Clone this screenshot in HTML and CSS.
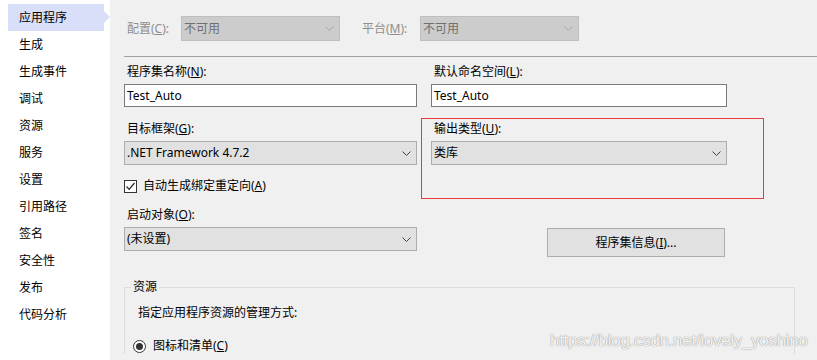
FILE: index.html
```html
<!DOCTYPE html>
<html lang="zh-CN">
<head>
<meta charset="utf-8"/>
<title>项目属性 - 应用程序</title>
<link rel="stylesheet" href="styles.css">
</head>
<body>
<div class="page">
  <!-- 左侧导航 -->
  <nav class="sidebar">
    <div class="nav-item active">应用程序</div>
    <div class="nav-item">生成</div>
    <div class="nav-item">生成事件</div>
    <div class="nav-item">调试</div>
    <div class="nav-item">资源</div>
    <div class="nav-item">服务</div>
    <div class="nav-item">设置</div>
    <div class="nav-item">引用路径</div>
    <div class="nav-item">签名</div>
    <div class="nav-item">安全性</div>
    <div class="nav-item">发布</div>
    <div class="nav-item">代码分析</div>
  </nav>

  <main class="main">
    <div class="config-row">
      <span class="label disabled cfg-label">配置(<u>C</u>):</span>
      <div class="combo disabled">
        <span>不可用</span>
        <svg class="chevron" width="9" height="5" viewBox="0 0 9 5"><polyline points="0.5,0.5 4.5,4.5 8.5,0.5"/></svg>
      </div>
      <span class="label disabled plat-label">平台(<u>M</u>):</span>
      <div class="combo disabled">
        <span>不可用</span>
        <svg class="chevron" width="9" height="5" viewBox="0 0 9 5"><polyline points="0.5,0.5 4.5,4.5 8.5,0.5"/></svg>
      </div>
    </div>

    <div class="separator"></div>

    <div class="form-grid">
      <div class="field">
        <span class="label">程序集名称(<u>N</u>):</span>
        <div class="textbox">Test_Auto</div>
      </div>
      <div class="field">
        <span class="label">默认命名空间(<u>L</u>):</span>
        <div class="textbox">Test_Auto</div>
      </div>

      <div class="field">
        <span class="label">目标框架(<u>G</u>):</span>
        <div class="combo">
          <span>.NET Framework 4.7.2</span>
          <svg class="chevron" width="9" height="5" viewBox="0 0 9 5"><polyline points="0.5,0.5 4.5,4.5 8.5,0.5"/></svg>
        </div>
      </div>
      <div class="field">
        <span class="label">输出类型(<u>U</u>):</span>
        <div class="combo">
          <span>类库</span>
          <svg class="chevron" width="9" height="5" viewBox="0 0 9 5"><polyline points="0.5,0.5 4.5,4.5 8.5,0.5"/></svg>
        </div>
      </div>

      <div class="check-row">
        <span class="checkbox">
          <svg width="11" height="11" viewBox="0 0 11 11"><polyline points="1.5,5.5 4.2,8.3 9.5,2"/></svg>
        </span>
        <span>自动生成绑定重定向(<u>A</u>)</span>
      </div>
      <div></div>

      <div class="field">
        <span class="label">启动对象(<u>O</u>):</span>
        <div class="combo">
          <span>(未设置)</span>
          <svg class="chevron" width="9" height="5" viewBox="0 0 9 5"><polyline points="0.5,0.5 4.5,4.5 8.5,0.5"/></svg>
        </div>
      </div>
      <div class="btn-cell">
        <button class="btn">程序集信息(<u>I</u>)...</button>
      </div>
    </div>

    <fieldset class="group">
      <legend>资源</legend>
      <div class="group-text">指定应用程序资源的管理方式:</div>
      <div class="radio-row">
        <span class="radio"><span class="dot"></span></span>
        <span>图标和清单(<u>C</u>)</span>
      </div>
    </fieldset>
  </main>
</div>

<!-- 红框标注 -->
<div class="annot"></div>
<div class="watermark">https://blog.csdn.net/lovely_yoshino</div>
</body>
</html>
```

FILE: styles.css
```css
html, body {
    height: 360px;
    overflow: hidden;
}

body {
    margin: 0;
    background: #f0f0f0;
    color: #000;
    font-family: "Noto Sans", "Noto Sans CJK SC", sans-serif;
    font-size: 12px;
    line-height: 16px;
}

.page {
    display: flex;
    height: 360px;
    overflow: hidden;
}

/* 左侧导航 */
.sidebar {
    width: 110px;
    flex-shrink: 0;
    background: #fff;
    padding-top: 4px;
    box-sizing: border-box;
}

.nav-item {
    position: relative;
    margin-left: 8px;
    width: 96px;
    height: 27px;
    line-height: 27px;
    padding-left: 11px;
    box-sizing: border-box;
}

.nav-item.active {
    background: #dadff9;
}

.nav-item.active::after {
    content: "";
    position: absolute;
    right: -6px;
    top: 7px;
    border-left: 6px solid #dadff9;
    border-top: 6px solid transparent;
    border-bottom: 6px solid transparent;
}

/* 右侧内容 */
.main {
    flex: 1;
    padding: 16px 0 0 14px;
    overflow: hidden;
}

.config-row {
    display: flex;
    align-items: center;
    height: 25px;
}

.label.disabled {
    color: #8e8e8e;
}

.cfg-label {
    width: 57px;
    padding-left: 3px;
    box-sizing: border-box;
}

.plat-label {
    width: 58px;
    margin-left: 22px;
}

.separator {
    height: 1px;
    background: #a0a0a0;
    margin-top: 15px;
}

.form-grid {
    display: grid;
    grid-template-columns: 293px 296px;
    column-gap: 14px;
    row-gap: 14px;
    margin-top: 7px;
}

.field {
    display: flex;
    flex-direction: column;
    gap: 4px;
}

.field .label {
    padding-left: 3px;
}

.textbox {
    height: 23px;
    box-sizing: border-box;
    background: #fff;
    border: 1px solid #7a7a7a;
    padding-left: 2px;
    line-height: 21px;
}

.combo {
    height: 24px;
    box-sizing: border-box;
    background: #e1e1e1;
    border: 1px solid #adadad;
    padding: 0 5px 0 2px;
    display: flex;
    align-items: center;
    justify-content: space-between;
}

.combo.disabled {
    width: 159px;
    height: 25px;
    background: #cccccc;
    border-color: #bfbfbf;
    color: #6f6f6f;
}

.chevron polyline {
    fill: none;
    stroke: #444;
    stroke-width: 1;
}

.combo.disabled .chevron polyline {
    stroke: #a8a8a8;
}

.check-row {
    display: flex;
    align-items: center;
    gap: 6px;
    margin: -1px 0;
    height: 16px;
}

.checkbox {
    width: 13px;
    height: 13px;
    box-sizing: border-box;
    border: 1px solid #333;
    background: #fff;
    display: flex;
    align-items: center;
    justify-content: center;
}

.checkbox polyline {
    fill: none;
    stroke: #222;
    stroke-width: 1.2;
}

.btn-cell {
    display: flex;
    justify-content: flex-end;
    padding-right: 2px;
}

.btn {
    margin-top: 21px;
    width: 178px;
    height: 29px;
    background: #e1e1e1;
    border: 1px solid #adadad;
    font: inherit;
    color: #000;
    padding: 0;
}

/* 资源分组 */
.group {
    margin: 22px 22px 0 0;
    border: 1px solid #dcdcdc;
    border-bottom: none;
    padding: 10px 13px 0 13px;
}

.group legend {
    padding: 0 2px;
    margin-left: -7px;
}

.radio-row {
    display: flex;
    align-items: center;
    gap: 7px;
    margin: 17px 0 0 -5px;
}

.radio {
    width: 13px;
    height: 13px;
    box-sizing: border-box;
    border: 1px solid #333;
    border-radius: 50%;
    background: #fff;
    display: flex;
    align-items: center;
    justify-content: center;
}

.radio .dot {
    width: 7px;
    height: 7px;
    border-radius: 50%;
    background: #333;
}

/* 标注与水印 */
.annot {
    position: absolute;
    left: 421px;
    top: 118px;
    width: 343px;
    height: 81px;
    box-sizing: border-box;
    border: 1px solid #e8393c;
}

.watermark {
    position: absolute;
    left: 550px;
    top: 333px;
    font-family: "Liberation Sans", sans-serif;
    font-size: 17px;
    letter-spacing: -0.3px;
    color: rgba(255, 255, 255, 0.9);
    text-shadow: 0 0 1px #9a9a9a, 0 0 1px #9a9a9a;
}
```
